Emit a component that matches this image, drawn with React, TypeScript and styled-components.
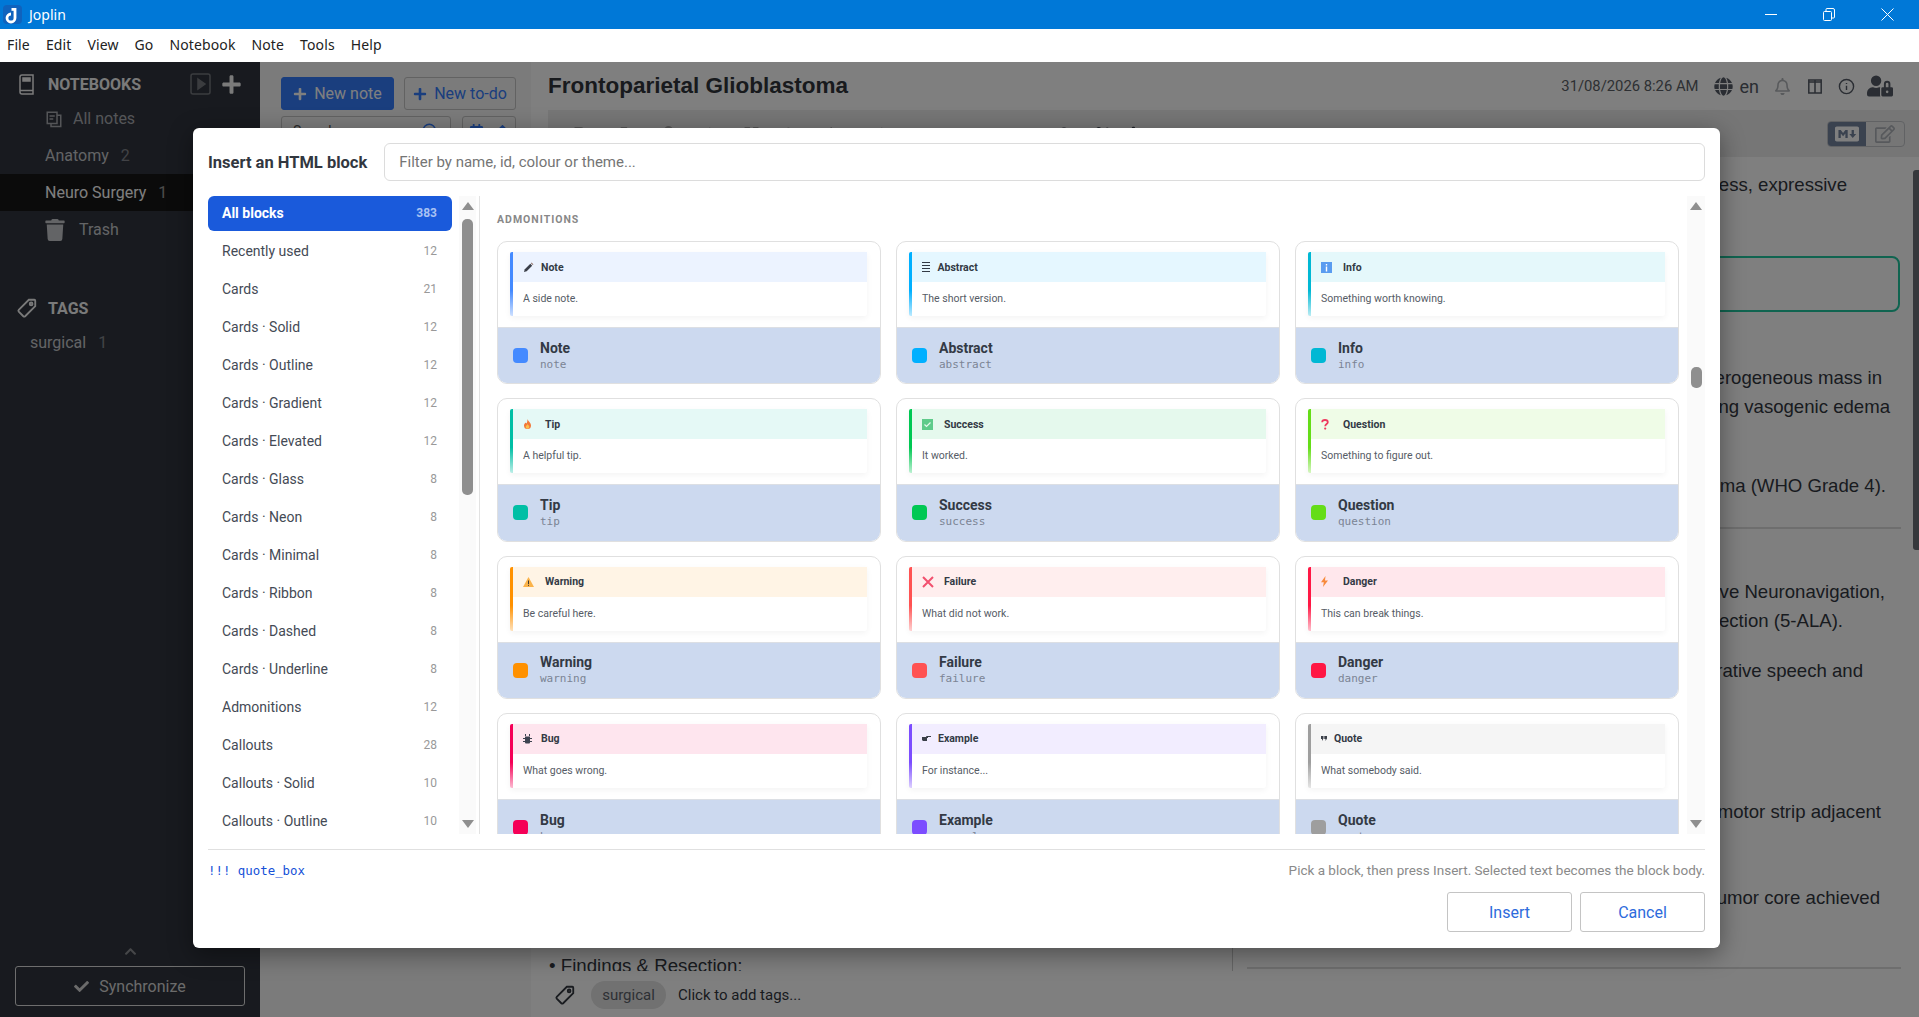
import React from "react";
import styled, { createGlobalStyle } from "styled-components";
import {
  FaPlus,
  FaTrash,
  FaCheck,
  FaGlobe,
  FaRegBell,
  FaUserLock,
  FaRegEdit,
  FaChevronUp,
  FaCalendarAlt,
  FaArrowUp,
  FaGraduationCap,
  FaBold,
  FaItalic,
  FaLink,
  FaCode,
  FaListUl,
  FaListOl,
  FaHeading,
  FaCut,
  FaPuzzlePiece,
  FaMarkdown,
} from "react-icons/fa";

const GlobalStyle = createGlobalStyle`
  html, body {
    margin: 0;
    padding: 0;
    height: 100%;
    overflow: hidden;
    font-family: Roboto, "Liberation Sans", sans-serif;
  }
  * { box-sizing: border-box; }
`;

const Page = styled.div`
  display: flex;
  flex-direction: column;
  width: 1919px;
  height: 1017px;
  overflow: hidden;
`;

/* window chrome */
const TitleBar = styled.div`
  display: flex;
  align-items: center;
  flex: 0 0 29px;
  background: #0078d7;
  color: #fff;
  padding-left: 3px;
  font: 14px "Noto Sans", sans-serif;
`;

const AppName = styled.span`
  margin-left: 7px;
`;

const WindowButtons = styled.div`
  display: flex;
  align-items: center;
  margin-left: auto;
  margin-right: 25px;
  gap: 46px;
`;

const MenuBar = styled.div`
  display: flex;
  align-items: center;
  flex: 0 0 33px;
  background: #fff;
  padding: 0 0 2px 0;
  margin-left: -1px;
  color: #222;
  font: 14px "Noto Sans", sans-serif;
  letter-spacing: 0.12px;
`;

const MenuItem = styled.span`
  padding: 0 8px;
`;

/* app behind the dialog */
const AppArea = styled.div`
  position: relative;
  flex: 1;
  display: flex;
  min-height: 0;
`;

const Sidebar = styled.div`
  display: flex;
  flex-direction: column;
  flex: 0 0 260px;
  background: #30353e;
  color: #fff;
`;

const SideHeading = styled.div<{ $top: number }>`
  display: flex;
  align-items: center;
  height: 22px;
  margin: ${(p) => p.$top}px 0 5px;
  padding-left: ${(p) => (p.$top > 20 ? 16 : 19)}px;
  font-weight: 700;
  font-size: 16px;
  color: #fff;
  opacity: 0.95;
`;

const HeadingLabel = styled.span<{ $left: number }>`
  margin-left: ${(p) => p.$left}px;
`;

const HeadingTools = styled.div`
  display: flex;
  align-items: center;
  gap: 10px;
  margin-left: auto;
  margin-right: 18px;
`;

const SideRow = styled.div<{ $active?: boolean; $dim?: boolean; $pad?: number }>`
  display: flex;
  align-items: center;
  height: 37px;
  padding-left: ${(p) => p.$pad ?? 45}px;
  font-size: 16px;
  background: ${(p) => (p.$active ? "#161616" : "transparent")};
  color: ${(p) => (p.$active ? "#fff" : p.$dim ? "#a8abb0" : "#c6c8cc")};
`;

const RowCount = styled.span`
  margin-left: 12px;
  opacity: 0.55;
`;

const SideIcon = styled.span<{ $gap: number }>`
  display: inline-flex;
  margin-right: ${(p) => p.$gap}px;
`;

const SideSpacer = styled.div`
  flex: 1;
`;

const Chevron = styled.div`
  display: flex;
  justify-content: center;
  color: #8d8f93;
  font-size: 13px;
  margin-bottom: 8px;
`;

const SyncButton = styled.div`
  display: flex;
  align-items: center;
  justify-content: center;
  gap: 10px;
  height: 40px;
  margin: 0 15px 11px;
  border: 1px solid #dcdcdc;
  border-radius: 3px;
  font-size: 16px;
  color: #d6d6d6;
`;

const NoteList = styled.div`
  flex: 0 0 271px;
  background: #f6f6f6;
  padding: 15px 15px 0 21px;
`;

const ButtonRow = styled.div`
  display: flex;
  gap: 10px;
`;

const NewButton = styled.div<{ $primary?: boolean }>`
  display: flex;
  align-items: center;
  justify-content: center;
  gap: 7px;
  height: 33px;
  flex: ${(p) => (p.$primary ? "0 0 113px" : "1")};
  border-radius: 3px;
  font-size: 16px;
  background: ${(p) => (p.$primary ? "#347cfc" : "transparent")};
  color: ${(p) => (p.$primary ? "#fff" : "#347cfc")};
  border: 1px solid ${(p) => (p.$primary ? "#347cfc" : "#c4c4c4")};
`;

const SearchRow = styled.div`
  display: flex;
  margin-top: 6px;
  gap: 11px;
`;

const SearchBox = styled.div`
  display: flex;
  align-items: center;
  justify-content: space-between;
  flex: 0 0 170px;
  height: 30px;
  padding: 0 11px;
  border: 1px solid #c4c4c4;
  border-radius: 3px;
  color: #555;
  font-size: 14px;
`;

const SearchGlyph = styled.span`
  display: inline-flex;
  color: #347cfc;
`;

const SortButtons = styled.div`
  display: flex;
  flex: 1;
  height: 30px;
  align-items: center;
  justify-content: space-around;
  border: 1px solid #c4c4c4;
  border-radius: 3px;
  color: #347cfc;
  font-size: 15px;
`;

const NotePane = styled.div`
  flex: 1;
  display: flex;
  flex-direction: column;
  min-width: 0;
  background: #fff;
`;

const NoteHeader = styled.div`
  display: flex;
  align-items: center;
  flex: 0 0 48px;
  padding: 0 26px 0 17px;
`;

const NoteTitle = styled.div`
  font: 700 22.5px "Liberation Sans", sans-serif;
  color: #30343b;
`;

const HeaderTools = styled.div`
  display: flex;
  align-items: center;
  margin-left: auto;
  color: #555b66;
`;

const DateText = styled.span`
  font-size: 14.8px;
  color: #5b5f66;
  margin-right: 15px;
`;

const Lang = styled.span`
  font-size: 18px;
  margin: 0 15px 0 7px;
`;

const HeadIcon = styled.span<{ $gap: number; $faded?: boolean }>`
  display: inline-flex;
  margin-right: ${(p) => p.$gap}px;
  opacity: ${(p) => (p.$faded ? 0.45 : 1)};
`;

const Toolbar = styled.div`
  display: flex;
  align-items: center;
  flex: 0 0 47px;
  margin-left: 17px;
  padding: 0 14px 0 24px;
  background: #ededed;
`;

const ToolIcon = styled.span<{ $gap: number; $faded?: boolean }>`
  display: inline-flex;
  margin-right: ${(p) => p.$gap}px;
  font-size: 15px;
  color: ${(p) => (p.$faded ? "#a9a9a9" : "#3f4652")};
`;

const ModeToggle = styled.div`
  display: flex;
  height: 26px;
  margin-left: auto;
  border: 1px solid #c2c4c8;
  border-radius: 4px;
`;

const ModeButton = styled.div<{ $on?: boolean }>`
  display: flex;
  align-items: center;
  justify-content: center;
  width: 38px;
  background: ${(p) => (p.$on ? "#74849e" : "transparent")};
  border-radius: 3px 0 0 3px;
  color: ${(p) => (p.$on ? "#fff" : "#aeb2b9")};
`;

const Panes = styled.div`
  flex: 1;
  display: flex;
  min-height: 0;
`;

const EditorPane = styled.div`
  flex: 0 0 702px;
  display: flex;
  flex-direction: column;
  justify-content: flex-end;
  padding-left: 18px;
  border-right: 1px solid #ccc;
  overflow: hidden;
  font: 18.7px/29px "Liberation Sans", sans-serif;
  color: #32373f;
`;

const EditorLine = styled.div`
  margin-bottom: -9px;
`;

const Viewer = styled.div`
  flex: 1;
  display: flex;
  min-width: 0;
  overflow: hidden;
`;

const ViewerBody = styled.div`
  flex: 1;
  min-width: 0;
  padding-top: 12.5px;
  font: 18.6px/29px "Liberation Sans", sans-serif;
  color: #32373f;
`;

const ViewerLine = styled.div<{ $gap: number; $inset: number }>`
  margin-top: ${(p) => p.$gap}px;
  padding-right: ${(p) => p.$inset}px;
  text-align: right;
  white-space: nowrap;
`;

const TealBox = styled.div`
  height: 56px;
  margin: 57.5px 13px 0 14px;
  border: 2px solid #20c8a0;
  border-radius: 8px;
`;

const Rule = styled.div<{ $gap: number }>`
  height: 2px;
  margin: ${(p) => p.$gap}px 12px 0 14px;
  background: #dcdcdc;
`;

const PaneScroll = styled.div`
  flex: 0 0 6px;
  height: 380px;
  margin-top: 13px;
  background: #6c7079;
  border-radius: 3px 0 0 3px;
`;

const TagBar = styled.div`
  display: flex;
  align-items: center;
  flex: 0 0 46px;
  padding: 2px 0 0 23px;
  font-size: 15px;
  color: #32373f;
`;

const TagPill = styled.span`
  display: inline-flex;
  align-items: center;
  justify-content: center;
  width: 75px;
  height: 28px;
  margin: 0 12px 0 15px;
  background: #e2e2e2;
  border-radius: 14px;
  color: #5b6069;
`;

/* dialog */
const Overlay = styled.div`
  position: absolute;
  inset: 0;
  padding: 66px 0 0 193px;
  background: rgba(0, 0, 0, 0.5);
`;

const Dialog = styled.div`
  display: flex;
  flex-direction: column;
  width: 1527px;
  height: 820px;
  padding: 15px;
  background: #fff;
  border-radius: 6px;
  box-shadow: 0 6px 24px rgba(0, 0, 0, 0.4);
`;

const DialogHeader = styled.div`
  display: flex;
  align-items: center;
  gap: 17px;
  flex: 0 0 38px;
`;

const DialogTitle = styled.div`
  font-weight: 700;
  font-size: 16.5px;
  color: #32373f;
  white-space: nowrap;
`;

const FilterInput = styled.div`
  flex: 1;
  display: flex;
  align-items: center;
  height: 38px;
  padding-left: 14px;
  border: 1px solid #dcdcdc;
  border-radius: 6px;
  font-size: 15px;
  color: #757575;
`;

const DialogBody = styled.div`
  display: flex;
  flex: none;
  height: 638px;
  margin-top: 15px;
  overflow: hidden;
`;

const Categories = styled.div`
  flex: 0 0 244px;
  display: flex;
  flex-direction: column;
  gap: 3px;
  overflow: hidden;
`;

const Category = styled.div<{ $active?: boolean }>`
  display: flex;
  align-items: center;
  justify-content: space-between;
  flex: 0 0 35px;
  padding: 0 15px 2px 14px;
  border-radius: 6px;
  font-size: 14px;
  font-weight: ${(p) => (p.$active ? 700 : 400)};
  background: ${(p) => (p.$active ? "#1a5adb" : "transparent")};
  color: ${(p) => (p.$active ? "#fff" : "#444a55")};
`;

const CategoryCount = styled.span<{ $active?: boolean }>`
  font-size: 12px;
  font-weight: ${(p) => (p.$active ? 700 : 400)};
  color: ${(p) => (p.$active ? "#a9c2f3" : "#999")};
`;

const ScrollTrack = styled.div<{ $width: number; $gap: number }>`
  display: flex;
  flex-direction: column;
  align-items: center;
  flex: 0 0 ${(p) => p.$width}px;
  margin-left: ${(p) => p.$gap}px;
  padding: 6px 0 6px;
  background: #fafafa;
`;

const ArrowUp = styled.div`
  width: 0;
  height: 0;
  border-left: 6px solid transparent;
  border-right: 6px solid transparent;
  border-bottom: 8px solid #8f8f8f;
`;

const ArrowDown = styled(ArrowUp)`
  margin-top: auto;
  border-bottom: 0;
  border-top: 8px solid #8f8f8f;
`;

const ScrollThumb = styled.div<{ $top: number; $height: number }>`
  width: 11px;
  height: ${(p) => p.$height}px;
  margin-top: ${(p) => p.$top}px;
  background: #8f8f8f;
  border-radius: 5px;
`;

const Gallery = styled.div`
  flex: 1;
  min-width: 0;
  margin-left: 3px;
  padding: 16px 8px 0 17px;
  border-left: 1px solid #e2e2e2;
  overflow: hidden;
`;

const SectionLabel = styled.div`
  height: 14px;
  margin: 1px 0 14px;
  font-size: 10.5px;
  line-height: 14px;
  font-weight: 700;
  letter-spacing: 1px;
  color: #888;
`;

const CardGrid = styled.div`
  display: grid;
  grid-template-columns: repeat(3, 1fr);
  grid-auto-rows: 143.33px;
  gap: 14px 15px;
`;

const Card = styled.div`
  display: flex;
  flex-direction: column;
  border: 1px solid #e0e0e0;
  border-radius: 10px;
  overflow: hidden;
`;

const Preview = styled.div`
  flex: 0 0 85px;
  padding: 10px 13px 0 12px;
`;

const Admonition = styled.div<{ $color: string }>`
  height: 64px;
  padding-left: 3px;
  border-radius: 2px;
  background: linear-gradient(${(p) => p.$color} 60%, ${(p) => p.$color}44) left / 3px 100% no-repeat, #fff;
  box-shadow: 0 2px 6px rgba(0, 0, 0, 0.05);
`;

const AdmonitionTitle = styled.div<{ $tint: string }>`
  display: flex;
  align-items: center;
  height: 30px;
  padding-left: 10px;
  background: ${(p) => p.$tint};
  font-size: 10.5px;
  font-weight: 700;
  color: #333a45;
`;

const GlyphBox = styled.span<{ $width: number }>`
  display: inline-flex;
  align-items: center;
  flex: 0 0 ${(p) => p.$width}px;
`;

const AdmonitionBody = styled.div`
  height: 34px;
  padding-left: 10px;
  font-size: 10.5px;
  line-height: 34px;
  color: #565c66;
`;

const CardFooter = styled.div`
  flex: 1;
  display: flex;
  align-items: center;
  gap: 12px;
  padding-left: 15px;
  background: #ccd9ef;
  border-top: 1px solid #dcdfe4;
`;

const Swatch = styled.span<{ $color: string }>`
  flex: 0 0 15px;
  height: 15px;
  border-radius: 4px;
  background: ${(p) => p.$color};
`;

const CardName = styled.div`
  margin-bottom: 2px;
  font-size: 14px;
  line-height: 16px;
  font-weight: 700;
  color: #333a45;
`;

const CardId = styled.div`
  font: 11px/14px "DejaVu Sans Mono", monospace;
  color: #7b8494;
`;

const StatusRow = styled.div`
  display: flex;
  align-items: center;
  justify-content: space-between;
  flex: 0 0 43px;
  margin-top: 15px;
  padding-bottom: 2px;
  border-top: 1px solid #e0e0e0;
`;

const Snippet = styled.span`
  font: 400 12.4px "DejaVu Sans Mono", monospace;
  color: #1450d8;
`;

const Hint = styled.span`
  font-size: 13.5px;
  color: #8a8a8a;
`;

const Actions = styled.div`
  display: flex;
  justify-content: flex-end;
  gap: 8px;
`;

const ActionButton = styled.div`
  display: flex;
  align-items: center;
  justify-content: center;
  width: 125px;
  height: 40px;
  border: 1px solid #c4c4c4;
  border-radius: 3px;
  font-size: 16px;
  color: #2d6bdc;
`;

const Stroke = ({ size, children }: { size: number; children: React.ReactNode }) => (
  <svg width={size} height={size} viewBox="0 0 24 24" fill="none" stroke="currentColor" strokeWidth="2">
    {children}
  </svg>
);

const JoplinLogo = () => (
  <svg width="19" height="19" viewBox="0 0 19 19">
    <rect width="19" height="19" rx="4" fill="#0f62bd" />
    <path d="M12 3v10a4 4 0 1 1-4-4" fill="none" stroke="#fff" strokeWidth="2.800" />
    <path d="M12 4.400H8.500" stroke="#fff" strokeWidth="2.800" />
  </svg>
);

const TagIcon = ({ size }: { size: number }) => (
  <Stroke size={size}>
    <path d="M14 3h6a1 1 0 0 1 1 1v6L10 21a1.500 1.500 0 0 1-2 0l-5-5a1.500 1.500 0 0 1 0-2z" />
    <circle cx="16.500" cy="7.500" r="1.500" />
  </Stroke>
);

const glyphs: Record<string, React.ReactNode> = {
  note: (
    <svg width="11" height="11" viewBox="0 0 12 12">
      <path d="M1 11l1-3 6-6 2 2-6 6z" fill="#3a3f48" />
      <path d="M8.600 1.400l.8-.8 2 2-.8.8z" fill="#8a6a60" />
    </svg>
  ),
  abstract: (
    <svg width="9" height="10" viewBox="0 0 9 10">
      <path d="M0 .5h8M0 3.500h8M0 6.500h8M0 9.500h8" stroke="#333a45" />
    </svg>
  ),
  info: (
    <svg width="11" height="11" viewBox="0 0 11 11">
      <rect width="11" height="11" fill="#5a9cf0" />
      <rect x="4.800" y="2" width="1.400" height="1.500" fill="#fff" />
      <rect x="4.800" y="4.500" width="1.400" height="5" fill="#fff" />
    </svg>
  ),
  tip: (
    <svg width="9" height="11" viewBox="0 0 9 11">
      <path d="M4.500 0c.5 2 3.500 3.500 3.500 6.500a3.500 3.500 0 0 1-7 0C1 5 2 4.500 2.500 3.500c.5.700 1 .8 1.200.8C4.300 3 4.500 1.500 4.500 0z" fill="#f2793a" />
      <path d="M4.500 5c.3 1 1.800 1.500 1.800 3a1.800 1.800 0 0 1-3.600 0c0-1.200 1.500-2 1.800-3z" fill="#fbc04d" />
    </svg>
  ),
  success: (
    <svg width="11" height="11" viewBox="0 0 11 11">
      <rect width="11" height="11" fill="#5ecb8a" />
      <path d="M2.500 5.500l2 2 4-4" fill="none" stroke="#e4f8ec" strokeWidth="1.200" />
    </svg>
  ),
  question: (
    <svg width="8" height="11" viewBox="0 0 8 11">
      <path d="M1.200 3.200C1.200 1.800 2.500 1 4 1s2.800.8 2.800 2.200C6.800 5 4.200 5 4.200 7.200" fill="none" stroke="#ee3a5f" strokeWidth="1.800" />
      <circle cx="4.200" cy="9.600" r="1.100" fill="#ee3a5f" />
    </svg>
  ),
  warning: (
    <svg width="11" height="10" viewBox="0 0 11 10">
      <path d="M5.500 0l5.500 10H0z" fill="#fbb34a" />
      <rect x="5" y="3.500" width="1" height="3.500" fill="#3f3a33" />
      <rect x="5" y="7.800" width="1" height="1" fill="#3f3a33" />
    </svg>
  ),
  failure: (
    <svg width="12" height="12" viewBox="0 0 12 12">
      <path d="M1 1l10 10M11 1L1 11" stroke="#f2506e" strokeWidth="2" />
    </svg>
  ),
  danger: (
    <svg width="7" height="11" viewBox="0 0 7 11">
      <path d="M4.500 0L0 6.200h2.800L2 11l5-6.500H4z" fill="#f78a3c" />
    </svg>
  ),
  bug: (
    <svg width="9" height="10" viewBox="0 0 9 10">
      <path d="M2 2.500h5v6a1 1 0 0 1-1 1H3a1 1 0 0 1-1-1z" fill="#3d4350" />
      <path d="M2.500 0v2M6.500 0v2M0 4.500h9M0 7.500h9" stroke="#3d4350" />
    </svg>
  ),
  example: (
    <svg width="9" height="6" viewBox="0 0 9 6">
      <path d="M0 1h4l.5-1H9v1H6v1H5v3H1L0 4z" fill="#3a3f48" />
    </svg>
  ),
  quote: (
    <svg width="6" height="5" viewBox="0 0 6 5">
      <path d="M0 0h2.500v2.500L1 5V3H0zM3.300 0H6v2.500L4.500 5V3H3.300z" fill="#3a3f48" />
    </svg>
  ),
};

const blocks = [
  { id: "note", name: "Note", text: "A side note.", color: "#448aff", tint: "#ecf3ff", glyph: 18 },
  { id: "abstract", name: "Abstract", text: "The short version.", color: "#00b0ff", tint: "#e5f7ff", glyph: 15.5 },
  { id: "info", name: "Info", text: "Something worth knowing.", color: "#00b8d4", tint: "#e5f8fb", glyph: 22 },
  { id: "tip", name: "Tip", text: "A helpful tip.", color: "#00bfa5", tint: "#e5f9f6", glyph: 22 },
  { id: "success", name: "Success", text: "It worked.", color: "#00c853", tint: "#e5f9ed", glyph: 22 },
  { id: "question", name: "Question", text: "Something to figure out.", color: "#64dd17", tint: "#effce7", glyph: 22 },
  { id: "warning", name: "Warning", text: "Be careful here.", color: "#ff9100", tint: "#fff4e5", glyph: 22 },
  { id: "failure", name: "Failure", text: "What did not work.", color: "#ff5252", tint: "#ffeeee", glyph: 22 },
  { id: "danger", name: "Danger", text: "This can break things.", color: "#ff1744", tint: "#ffe7ec", glyph: 22 },
  { id: "bug", name: "Bug", text: "What goes wrong.", color: "#f50057", tint: "#fee5ee", glyph: 18 },
  { id: "example", name: "Example", text: "For instance...", color: "#7c4dff", tint: "#f2edff", glyph: 16 },
  { id: "quote", name: "Quote", text: "What somebody said.", color: "#9e9e9e", tint: "#f5f5f5", glyph: 13 },
];

const categories = [
  ["Recently used", 12],
  ["Cards", 21],
  ["Cards · Solid", 12],
  ["Cards · Outline", 12],
  ["Cards · Gradient", 12],
  ["Cards · Elevated", 12],
  ["Cards · Glass", 8],
  ["Cards · Neon", 8],
  ["Cards · Minimal", 8],
  ["Cards · Ribbon", 8],
  ["Cards · Dashed", 8],
  ["Cards · Underline", 8],
  ["Admonitions", 12],
  ["Callouts", 28],
  ["Callouts · Solid", 10],
  ["Callouts · Outline", 10],
];

const menus = ["File", "Edit", "View", "Go", "Notebook", "Note", "Tools", "Help"];

const App: React.FC = () => {
  return (
    <Page>
      <GlobalStyle />
      <TitleBar>
        <JoplinLogo />
        <AppName>Joplin</AppName>
        <WindowButtons>
          <svg width="12" height="12" viewBox="0 0 12 12">
            <path d="M0 5.500h12" stroke="#fff" />
          </svg>
          <svg width="12" height="13" viewBox="0 0 12 13" fill="none" stroke="#fff">
            <rect x=".5" y="3.500" width="8" height="9" rx="1" />
            <path d="M3 3V1.500a1 1 0 0 1 1-1h6a1.500 1.500 0 0 1 1.500 1.500v7a1 1 0 0 1-1 1H9" />
          </svg>
          <svg width="13" height="13" viewBox="0 0 13 13">
            <path d="M.5.500l12 12M12.500.500l-12 12" stroke="#fff" />
          </svg>
        </WindowButtons>
      </TitleBar>
      <MenuBar>
        {menus.map((m) => (
          <MenuItem key={m}>{m}</MenuItem>
        ))}
      </MenuBar>
      <AppArea>
        <Sidebar>
          <SideHeading $top={11}>
            <svg width="15" height="21" viewBox="0 0 15 21" fill="none" stroke="currentColor" strokeWidth="1.500">
              <path d="M3 1h11v19H3a2 2 0 0 1-2-2V3a2 2 0 0 1 2-2zM1 16.500h13" />
              <rect x="4" y="4" width="7" height="3" fill="currentColor" />
            </svg>
            <HeadingLabel $left={14}>NOTEBOOKS</HeadingLabel>
            <HeadingTools>
              <svg width="21" height="22" viewBox="0 0 21 22" fill="none" stroke="#7a7d83" strokeWidth="1.500">
                <rect x="1" y="1" width="19" height="20" rx="2" />
                <path d="M8 6l7 5-7 5z" fill="#7a7d83" />
              </svg>
              <FaPlus size={21} />
            </HeadingTools>
          </SideHeading>
          <SideRow $dim>
            <SideIcon $gap={10}>
              <Stroke size={18}>
                <path d="M3 3h13v15H3zM16 7h5v15H8v-4M6 8h7M6 12h5" />
              </Stroke>
            </SideIcon>
            All notes
          </SideRow>
          <SideRow>
            Anatomy<RowCount>2</RowCount>
          </SideRow>
          <SideRow $active>
            Neuro Surgery<RowCount>1</RowCount>
          </SideRow>
          <SideRow $pad={44}>
            <SideIcon $gap={13}>
              <FaTrash size={22} />
            </SideIcon>
            Trash
          </SideRow>
          <SideHeading $top={49}>
            <TagIcon size={22} />
            <HeadingLabel $left={10}>TAGS</HeadingLabel>
          </SideHeading>
          <SideRow $pad={30}>
            surgical<RowCount>1</RowCount>
          </SideRow>
          <SideSpacer />
          <Chevron>
            <FaChevronUp />
          </Chevron>
          <SyncButton>
            <FaCheck size={15} />
            Synchronize
          </SyncButton>
        </Sidebar>
        <NoteList>
          <ButtonRow>
            <NewButton $primary>
              <FaPlus size={14} />
              New note
            </NewButton>
            <NewButton>
              <FaPlus size={14} />
              New to-do
            </NewButton>
          </ButtonRow>
          <SearchRow>
            <SearchBox>
              Search...
              <SearchGlyph>
                <Stroke size={18}>
                  <circle cx="11" cy="11" r="8" />
                  <path d="M17 17l5 5" />
                </Stroke>
              </SearchGlyph>
            </SearchBox>
            <SortButtons>
              <FaCalendarAlt />
              <FaArrowUp />
            </SortButtons>
          </SearchRow>
        </NoteList>
        <NotePane>
          <NoteHeader>
            <NoteTitle>Frontoparietal Glioblastoma</NoteTitle>
            <HeaderTools>
              <DateText>31/08/2026 8:26 AM</DateText>
              <FaGlobe size={19} />
              <Lang>en</Lang>
              <HeadIcon $gap={17} $faded>
                <FaRegBell size={17} />
              </HeadIcon>
              <HeadIcon $gap={16}>
                <svg width="14" height="15" viewBox="0 0 14 15" fill="none" stroke="currentColor" strokeWidth="1.500">
                  <rect x=".8" y="1" width="12.400" height="13" />
                  <path d="M7 1v13M1 3h12" />
                </svg>
              </HeadIcon>
              <HeadIcon $gap={12}>
                <Stroke size={17}>
                  <circle cx="12" cy="12" r="10" />
                  <path d="M12 11v6M12 7v1.500" />
                </Stroke>
              </HeadIcon>
              <FaUserLock size={26} />
            </HeaderTools>
          </NoteHeader>
          <Toolbar>
            <ToolIcon $gap={28} $faded><FaBold /></ToolIcon>
            <ToolIcon $gap={28} $faded><FaItalic /></ToolIcon>
            <ToolIcon $gap={28} $faded><FaLink /></ToolIcon>
            <ToolIcon $gap={28} $faded><FaCode /></ToolIcon>
            <ToolIcon $gap={28} $faded><FaHeading /></ToolIcon>
            <ToolIcon $gap={28} $faded><FaListUl /></ToolIcon>
            <ToolIcon $gap={28} $faded><FaListOl /></ToolIcon>
            <ToolIcon $gap={165} $faded><FaCode /></ToolIcon>
            <ToolIcon $gap={20}><FaGraduationCap size={22} /></ToolIcon>
            <ToolIcon $gap={18}><FaCut /></ToolIcon>
            <ToolIcon $gap={0}><FaPuzzlePiece /></ToolIcon>
            <ModeToggle>
              <ModeButton $on>
                <FaMarkdown size={24} />
              </ModeButton>
              <ModeButton>
                <FaRegEdit size={20} />
              </ModeButton>
            </ModeToggle>
          </Toolbar>
          <Panes>
            <EditorPane>
              <EditorLine>• Findings &amp; Resection:</EditorLine>
            </EditorPane>
            <Viewer>
              <ViewerBody>
                <ViewerLine $gap={0} $inset={66}>weakness, expressive</ViewerLine>
                <TealBox />
                <ViewerLine $gap={50.5} $inset={31}>heterogeneous mass in</ViewerLine>
                <ViewerLine $gap={0} $inset={23}>causing vasogenic edema</ViewerLine>
                <ViewerLine $gap={50} $inset={27}>Glioblastoma (WHO Grade 4).</ViewerLine>
                <Rule $gap={27.5} />
                <ViewerLine $gap={47.5} $inset={28}>Intraoperative Neuronavigation,</ViewerLine>
                <ViewerLine $gap={0} $inset={70}>resection (5-ALA).</ViewerLine>
                <ViewerLine $gap={21} $inset={50}>intraoperative speech and</ViewerLine>
                <ViewerLine $gap={112} $inset={32}>motor strip adjacent</ViewerLine>
                <ViewerLine $gap={57} $inset={33}>tumor core achieved</ViewerLine>
                <Rule $gap={55.5} />
              </ViewerBody>
              <PaneScroll />
            </Viewer>
          </Panes>
          <TagBar>
            <TagIcon size={22} />
            <TagPill>surgical</TagPill>
            Click to add tags...
          </TagBar>
        </NotePane>

        <Overlay>
          <Dialog>
            <DialogHeader>
              <DialogTitle>Insert an HTML block</DialogTitle>
              <FilterInput>Filter by name, id, colour or theme...</FilterInput>
            </DialogHeader>
            <DialogBody>
              <Categories>
                <Category $active>
                  All blocks
                  <CategoryCount $active>383</CategoryCount>
                </Category>
                {categories.map(([label, count]) => (
                  <Category key={label}>
                    {label}
                    <CategoryCount>{count}</CategoryCount>
                  </Category>
                ))}
              </Categories>
              <ScrollTrack $width={17} $gap={7}>
                <ArrowUp />
                <ScrollThumb $top={9} $height={276} />
                <ArrowDown />
              </ScrollTrack>
              <Gallery>
                <SectionLabel>ADMONITIONS</SectionLabel>
                <CardGrid>
                  {blocks.map((b) => (
                    <Card key={b.id}>
                      <Preview>
                        <Admonition $color={b.color}>
                          <AdmonitionTitle $tint={b.tint}>
                            <GlyphBox $width={b.glyph}>{glyphs[b.id]}</GlyphBox>
                            {b.name}
                          </AdmonitionTitle>
                          <AdmonitionBody>{b.text}</AdmonitionBody>
                        </Admonition>
                      </Preview>
                      <CardFooter>
                        <Swatch $color={b.color} />
                        <div>
                          <CardName>{b.name}</CardName>
                          <CardId>{b.id}</CardId>
                        </div>
                      </CardFooter>
                    </Card>
                  ))}
                </CardGrid>
              </Gallery>
              <ScrollTrack $width={18} $gap={0}>
                <ArrowUp />
                <ScrollThumb $top={157} $height={21} />
                <ArrowDown />
              </ScrollTrack>
            </DialogBody>
            <StatusRow>
              <Snippet>!!! quote_box</Snippet>
              <Hint>Pick a block, then press Insert. Selected text becomes the block body.</Hint>
            </StatusRow>
            <Actions>
              <ActionButton>Insert</ActionButton>
              <ActionButton>Cancel</ActionButton>
            </Actions>
          </Dialog>
        </Overlay>
      </AppArea>
    </Page>
  );
};

export default App;
